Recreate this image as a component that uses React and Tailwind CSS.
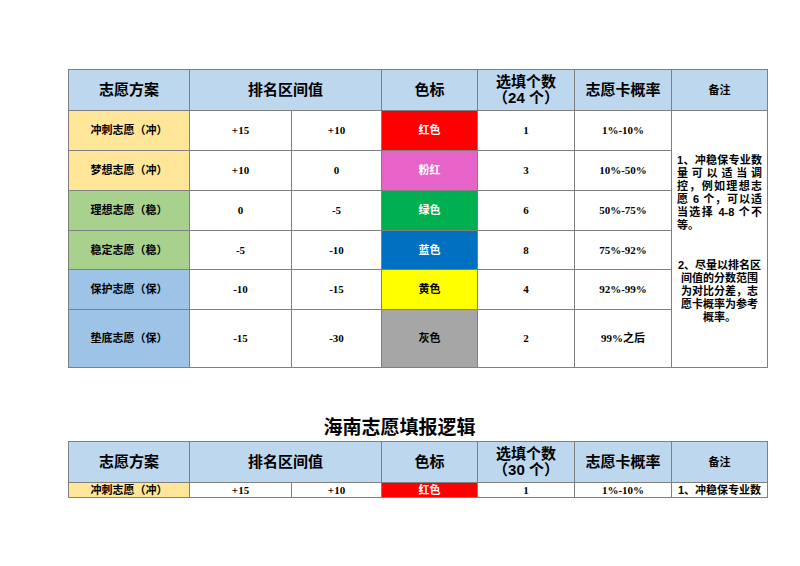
const rows = [
  { name: "冲刺志愿（冲）", bg: "bg-[#ffe699]", a: "+15", b: "+10", tag: "红色", tagBg: "bg-[#ff0000]", tagText: "text-white", n: "1", p: "1%-10%", h: "h-[40px]" },
  { name: "梦想志愿（冲）", bg: "bg-[#ffe699]", a: "+10", b: "0", tag: "粉红", tagBg: "bg-[#e663c8]", tagText: "text-white", n: "3", p: "10%-50%", h: "h-[40px]" },
  { name: "理想志愿（稳）", bg: "bg-[#a9d18e]", a: "0", b: "-5", tag: "绿色", tagBg: "bg-[#00b050]", tagText: "text-white", n: "6", p: "50%-75%", h: "h-[40px]" },
  { name: "稳定志愿（稳）", bg: "bg-[#a9d18e]", a: "-5", b: "-10", tag: "蓝色", tagBg: "bg-[#0070c0]", tagText: "text-white", n: "8", p: "75%-92%", h: "h-[39px]" },
  { name: "保护志愿（保）", bg: "bg-[#9dc3e6]", a: "-10", b: "-15", tag: "黄色", tagBg: "bg-[#ffff00]", tagText: "text-black", n: "4", p: "92%-99%", h: "h-[40px]" },
  { name: "垫底志愿（保）", bg: "bg-[#9dc3e6]", a: "-15", b: "-30", tag: "灰色", tagBg: "bg-[#a6a6a6]", tagText: "text-black", n: "2", p: "99%之后", h: "h-[58px]" },
];

const cjk = "font-['Liberation_Sans','Noto_Sans_CJK_SC',sans-serif]";
const num = "font-['Liberation_Serif','Noto_Sans_CJK_SC',serif]";
const cell = "border border-[#7f7f7f] text-center align-middle p-0";

function Header({ count }) {
  return (
    <tr className="h-[41px] bg-[#bdd7ee]">
      <th className={`${cell} text-[15px] font-bold`}>志愿方案</th>
      <th colSpan={2} className={`${cell} text-[15px] font-bold`}>排名区间值</th>
      <th className={`${cell} text-[15px] font-bold`}>色标</th>
      <th className={`${cell} text-[15px] font-bold leading-[16px]`}>
        选填个数
        <br />
        （{count} 个）
      </th>
      <th className={`${cell} text-[15px] font-bold`}>志愿卡概率</th>
      <th className={`${cell} text-[11px] font-bold`}>备注</th>
    </tr>
  );
}

function Cols() {
  return (
    <colgroup>
      <col className="w-[121px]" />
      <col className="w-[102px]" />
      <col className="w-[90px]" />
      <col className="w-[96px]" />
      <col className="w-[97px]" />
      <col className="w-[97px]" />
      <col className="w-[96px]" />
    </colgroup>
  );
}

const notes1 = ["1、冲稳保专业数", "量可以适当调", "控，例如理想志", "愿 6 个，可以适", "当选择 4-8 个不"];
const notes2 = ["2、尽量以排名区", "间值的分数范围", "为对比分差，志", "愿卡概率为参考", "概率。"];

export default function App() {
  return (
    <div className={`w-[800px] h-[566px] bg-white text-black ${cjk}`}>
      <div className="pt-[69px] pl-[68px]">
        <table className="table-fixed border-collapse w-[699px]">
          <Cols />
          <thead>
            <Header count="24" />
          </thead>
          <tbody>
            {rows.map((r, i) => (
              <tr key={r.name} className={r.h}>
                <td className={`${cell} ${r.bg} text-[11px] font-bold`}>{r.name}</td>
                <td className={`${cell} ${num} text-[11px] font-semibold`}>{r.a}</td>
                <td className={`${cell} ${num} text-[11px] font-semibold`}>{r.b}</td>
                <td className={`${cell} ${r.tagBg} ${r.tagText} text-[11px] font-bold`}>{r.tag}</td>
                <td className={`${cell} ${num} text-[11px] font-semibold`}>{r.n}</td>
                <td className={`${cell} ${num} text-[11px] font-semibold`}>{r.p}</td>
                {i === 0 && (
                  <td rowSpan={6} className={`${cell} text-[11px] font-bold leading-[13px] px-[5px]`}>
                    <div className="text-justify">
                      {notes1.map((l) => (
                        <div key={l} className="[text-align-last:justify]">{l}</div>
                      ))}
                      <div className="text-left">等。</div>
                    </div>
                    <div className="mt-[27px] text-center">
                      {notes2.map((l) => (
                        <div key={l}>{l}</div>
                      ))}
                    </div>
                  </td>
                )}
              </tr>
            ))}
          </tbody>
        </table>

        <div className="w-[699px] pr-[36px] mt-[49px] text-center text-[19px] font-bold leading-[22px]">
          海南志愿填报逻辑
        </div>

        <table className="table-fixed border-collapse w-[699px] mt-[2px]">
          <Cols />
          <thead>
            <Header count="30" />
          </thead>
          <tbody>
            <tr className="h-[15px]">
              <td className={`${cell} bg-[#ffe699] text-[11px] font-bold leading-[13px]`}>冲刺志愿（冲）</td>
              <td className={`${cell} ${num} text-[11px] font-semibold leading-[13px]`}>+15</td>
              <td className={`${cell} ${num} text-[11px] font-semibold leading-[13px]`}>+10</td>
              <td className={`${cell} bg-[#ff0000] text-white text-[11px] font-bold leading-[13px]`}>红色</td>
              <td className={`${cell} ${num} text-[11px] font-semibold leading-[13px]`}>1</td>
              <td className={`${cell} ${num} text-[11px] font-semibold leading-[13px]`}>1%-10%</td>
              <td className={`${cell} text-[11px] font-bold leading-[13px]`}>1、冲稳保专业数</td>
            </tr>
          </tbody>
        </table>
      </div>
    </div>
  );
}
